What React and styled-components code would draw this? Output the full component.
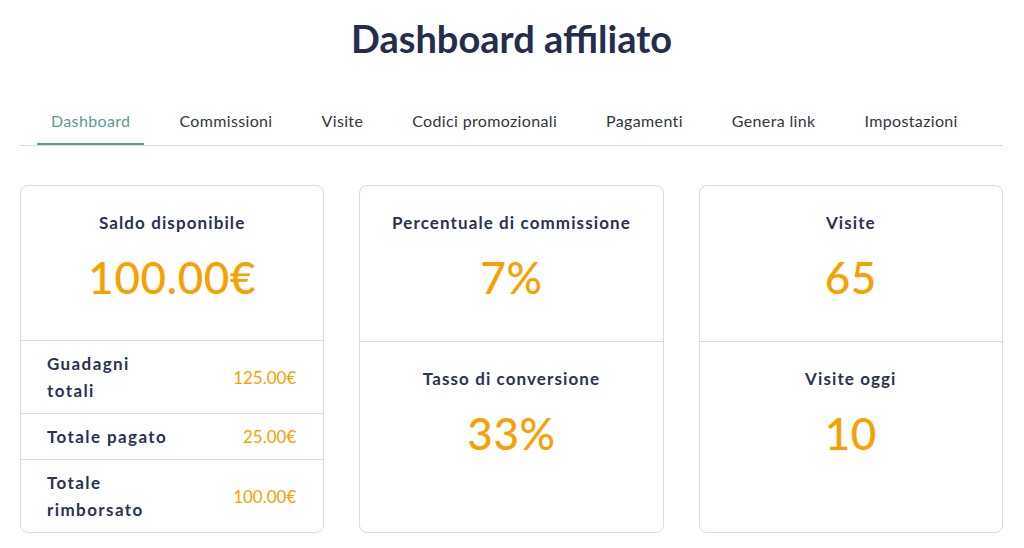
import React from "react";
import styled, { createGlobalStyle } from "styled-components";

const Global = createGlobalStyle`
  html, body { margin: 0; padding: 0; background: #fff; }
  body { font-family: "Lato", "Noto Sans", sans-serif; color: #2a3350; }
  * { box-sizing: border-box; }
`;

const Page = styled.div`
  width: 1024px;
  padding: 0 21px 0 20px;
`;

const Title = styled.h1`
  margin: 0;
  padding-top: 16px;
  height: 62px;
  text-align: center;
  font-size: 38px;
  line-height: 44px;
  font-weight: 700;
  color: #242e4c;
`;

const TabBar = styled.nav`
  display: flex;
  gap: 21px;
  margin-top: 36px;
  padding-left: 17px;
  border-bottom: 1px solid #dcdcdc;
`;

const Tab = styled.div`
  padding: 13px 14px 12px;
  font-size: 16px;
  line-height: 20px;
  letter-spacing: 0.35px;
  color: ${(p) => (p.$active ? "#5b9c96" : "#333640")};
  border-bottom: 2px solid ${(p) => (p.$active ? "#5b9c96" : "transparent")};
`;

const Grid = styled.div`
  display: grid;
  grid-template-columns: repeat(3, 1fr);
  gap: 35px;
  margin-top: 39px;
`;

const Card = styled.div`
  display: flex;
  flex-direction: column;
  height: 348px;
  border: 1px solid #dcdcdc;
  border-radius: 8px;
  overflow: hidden;
`;

const Section = styled.div`
  display: flex;
  flex-direction: column;
  align-items: center;
  padding-top: 26px;
  ${(p) => (p.$top ? "height: 156px; border-bottom: 1px solid #dcdcdc;" : "flex: 1;")}
`;

const Label = styled.div`
  font-size: 17px;
  line-height: 22px;
  font-weight: 700;
  letter-spacing: 1.1px;
  color: #2a3350;
`;

const Value = styled.div`
  margin-top: 18px;
  font-size: 44px;
  line-height: 50px;
  font-weight: 500;
  letter-spacing: 0.6px;
  color: #f8a000;
`;

const Rows = styled.div`
  flex: 1;
  display: flex;
  flex-direction: column;
`;

const Row = styled.div`
  display: flex;
  align-items: center;
  justify-content: space-between;
  padding: 9px 27px 9px 26px;
  & + & { border-top: 1px solid #dcdcdc; }
  &:last-child { flex: 1; }
`;

const RowLabel = styled.div`
  width: 126px;
  font-size: 17px;
  line-height: 27px;
  font-weight: 700;
  letter-spacing: 1.4px;
  color: #2a3350;
`;

const RowValue = styled.div`
  font-size: 17px;
  line-height: 27px;
  color: #f8a000;
`;

const tabs = [
  "Dashboard",
  "Commissioni",
  "Visite",
  "Codici promozionali",
  "Pagamenti",
  "Genera link",
  "Impostazioni",
];

const rows = [
  ["Guadagni totali", "125.00€"],
  ["Totale pagato", "25.00€"],
  ["Totale rimborsato", "100.00€"],
];

export default function App() {
  return (
    <Page>
      <Global />
      <Title>Dashboard affiliato</Title>
      <TabBar>
        {tabs.map((t, i) => (
          <Tab key={t} $active={i === 0}>
            {t}
          </Tab>
        ))}
      </TabBar>
      <Grid>
        <Card>
          <Section $top>
            <Label>Saldo disponibile</Label>
            <Value>100.00€</Value>
          </Section>
          <Rows>
            {rows.map(([l, v]) => (
              <Row key={l}>
                <RowLabel>{l}</RowLabel>
                <RowValue>{v}</RowValue>
              </Row>
            ))}
          </Rows>
        </Card>
        <Card>
          <Section $top>
            <Label>Percentuale di commissione</Label>
            <Value>7%</Value>
          </Section>
          <Section>
            <Label>Tasso di conversione</Label>
            <Value>33%</Value>
          </Section>
        </Card>
        <Card>
          <Section $top>
            <Label>Visite</Label>
            <Value>65</Value>
          </Section>
          <Section>
            <Label>Visite oggi</Label>
            <Value>10</Value>
          </Section>
        </Card>
      </Grid>
    </Page>
  );
}
